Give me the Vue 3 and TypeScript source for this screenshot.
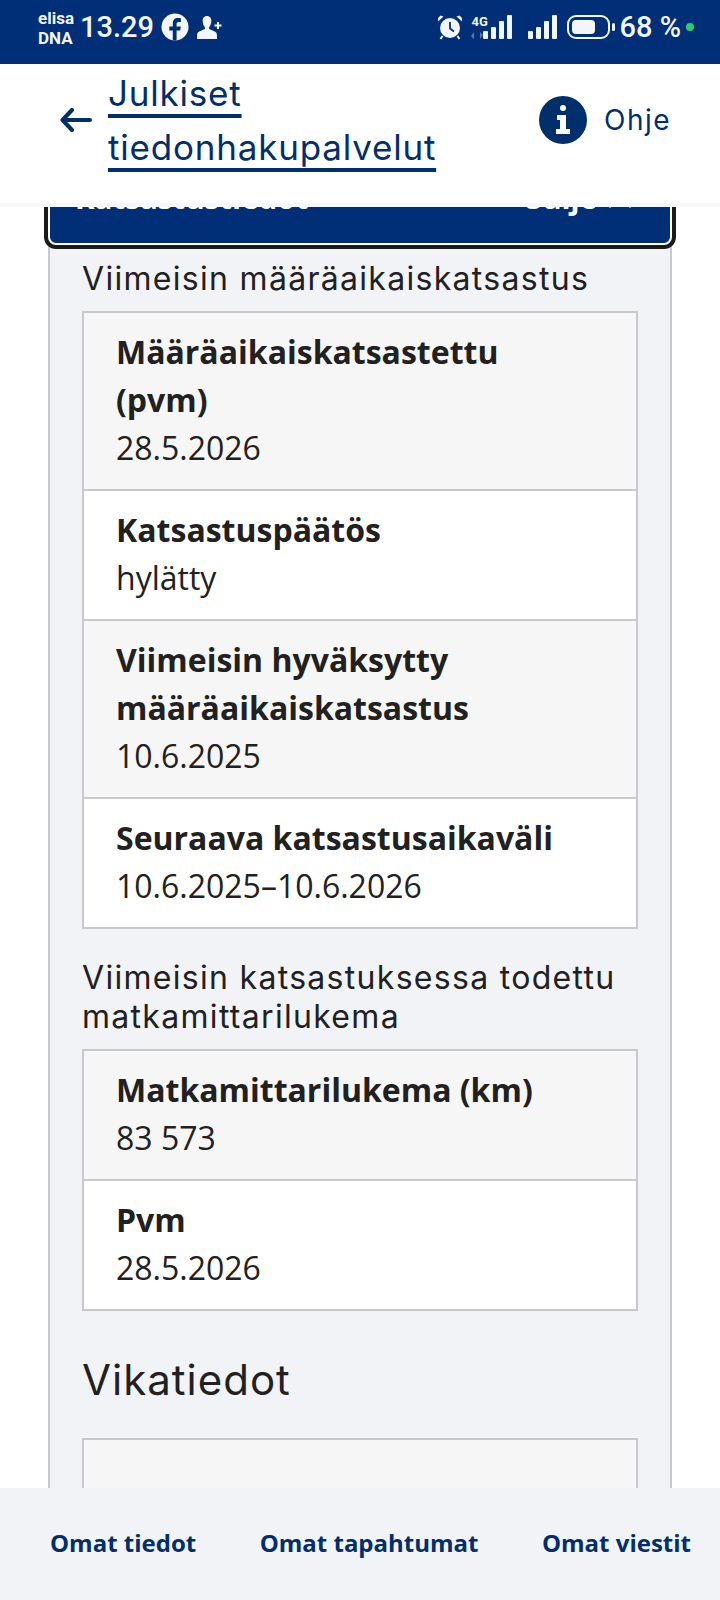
<template>
  <div class="page">
    <!-- android status bar -->
    <div class="status">
      <div class="carrier"><span>elisa</span><span>DNA</span></div>
      <span class="clock">13.29</span>
      <svg class="ic-fb" viewBox="0 0 28 28">
        <circle cx="14" cy="14" r="13.5" fill="#f2f5fa" />
        <path d="M15.6 27.5V17.4h3.6l.6-4h-4.2v-2.5c0-1.2.5-2 2.1-2h2.2V5.3c-.5-.1-1.700-.2-3-.2-3.100 0-5.100 1.900-5.100 5.200v3.100H8.300v4h3.500v10.100z" fill="#002f78" />
      </svg>
      <svg class="ic-user" viewBox="0 0 26 25">
        <path d="M10 1c3 0 4.600 2.300 4.300 5.400-.2 2.300-1 4.300-2 5.500-.6.800-.4 1.900.5 2.300l5.400 2.600c1.400.7 1.800 2 1.800 4.200v3H0v-3c0-2.200.4-3.500 1.800-4.200l5.400-2.600c.9-.4 1.100-1.500.5-2.300-1-1.200-1.800-3.200-2-5.500C5.400 3.300 7 1 10 1z" fill="#f2f5fa" />
        <path d="M20 7h2v2.500h2.500v2H22V14h-2v-2.500h-2.500v-2H20z" fill="#f2f5fa" />
      </svg>
      <div class="spacer"></div>
      <svg class="ic-alarm" viewBox="0 0 26 26">
        <circle cx="13" cy="14" r="10" fill="#f2f5fa" />
        <path d="M13 8v6.500l4 3" fill="none" stroke="#002f78" stroke-width="1.800" />
        <path d="M1 7.500 6.500 2.500 3.500 1.500 1 4zM25 7.500 19.500 2.500 22.500 1.500 25 4z" fill="#f2f5fa" />
        <path d="M5.500 22 3.500 25M20.500 22l2 3" stroke="#f2f5fa" stroke-width="2" />
      </svg>
      <div class="net">
        <span class="four-g">4G</span>
        <svg class="arrows" viewBox="0 0 12 7"><path d="M3 0v7L0 4zM9 7V0l3 3z" fill="#5b78a8" /></svg>
      </div>
      <div class="bars first">
        <i v-for="h in barHeights" :key="h" :style="{ height: h + 'px' }"></i>
      </div>
      <div class="bars second">
        <i v-for="h in barHeights" :key="h" :style="{ height: h + 'px' }"></i>
      </div>
      <div class="battery"><div class="level"></div></div>
      <div class="nub"></div>
      <span class="percent">68 %</span>
      <span class="dot"></span>
    </div>

    <!-- app header -->
    <header class="top">
      <svg class="back" viewBox="0 0 32 24">
        <path d="M30 12H3M12 2 2.500 12l9.500 10" fill="none" stroke="#002f6c" stroke-width="4" stroke-linecap="round" stroke-linejoin="round" />
      </svg>
      <a class="title">Julkiset tiedonhakupalvelut</a>
      <svg class="info" viewBox="0 0 48 48">
        <circle cx="24" cy="24" r="24" fill="#002f6c" />
        <circle cx="24" cy="12" r="3" fill="#fff" />
        <path d="M18 19h9v14h4v5H17v-5h4v-9h-3z" fill="#fff" />
      </svg>
      <span class="help">Ohje</span>
    </header>

    <main class="scroll">
      <div class="card">
        <div class="accordion">
          <span>Katsastustiedot</span>
          <span class="toggle">
            Sulje
            <svg viewBox="0 0 24 14"><path d="M1 13 12 2l11 11" fill="none" stroke="#fff" stroke-width="3" /></svg>
          </span>
        </div>

        <div class="body">
          <section v-for="group in groups" :key="group.title" class="group">
            <h3>{{ group.title }}</h3>
            <dl class="table">
              <div v-for="row in group.rows" :key="row.label" class="row">
                <dt>{{ row.label }}</dt>
                <dd>{{ row.value }}</dd>
              </div>
            </dl>
          </section>

          <h2>Vikatiedot</h2>
          <div class="table"><div class="row empty"></div></div>
        </div>
      </div>
    </main>

    <nav class="bottom">
      <a>Omat tiedot</a>
      <a>Omat tapahtumat</a>
      <a>Omat viestit</a>
    </nav>
  </div>
</template>

<script setup lang="ts">
interface Row {
  label: string
  value: string
}

const barHeights = [8, 12, 18, 24]

const groups: { title: string; rows: Row[] }[] = [
  {
    title: 'Viimeisin määräaikaiskatsastus',
    rows: [
      { label: 'Määräaikaiskatsastettu (pvm)', value: '28.5.2026' },
      { label: 'Katsastuspäätös', value: 'hylätty' },
      { label: 'Viimeisin hyväksytty määräaikaiskatsastus', value: '10.6.2025' },
      { label: 'Seuraava katsastusaikaväli', value: '10.6.2025–10.6.2026' }
    ]
  },
  {
    title: 'Viimeisin katsastuksessa todettu matkamittarilukema',
    rows: [
      { label: 'Matkamittarilukema (km)', value: '83 573' },
      { label: 'Pvm', value: '28.5.2026' }
    ]
  }
]
</script>

<style>
html,
body {
  margin: 0;
  background: #fff;
}
</style>

<style scoped>
.page {
  width: 720px;
  height: 1600px;
  display: flex;
  flex-direction: column;
  overflow: hidden;
  font-family: "Open Sans", "Noto Sans", sans-serif;
  color: #212121;
}

/* status bar */
.status {
  height: 64px;
  flex: none;
  background: #002f78;
  color: #f2f5fa;
  display: flex;
  align-items: center;
  padding: 0 26px 10px 38px;
  box-sizing: border-box;
  font-family: Roboto, sans-serif;
}
.carrier {
  display: flex;
  flex-direction: column;
  font-size: 17px;
  font-weight: 700;
  line-height: 20px;
  width: 42px;
  flex: none;
  margin-top: 2px;
}
.clock {
  font-size: 29px;
  font-weight: 500;
  width: 81px;
  flex: none;
}
.ic-fb {
  width: 28px;
  height: 28px;
}
.ic-user {
  width: 26px;
  height: 25px;
  margin-left: 8px;
}
.spacer {
  flex: 1;
}
.ic-alarm {
  width: 26px;
  height: 26px;
  margin-right: 8px;
}
.net {
  width: 12px;
  height: 24px;
  display: flex;
  flex-direction: column;
  align-items: flex-start;
  justify-content: space-between;
}
.four-g {
  font-size: 13px;
  font-weight: 700;
  line-height: 13px;
  white-space: nowrap;
}
.arrows {
  width: 12px;
  height: 7px;
}
.bars {
  height: 24px;
  display: flex;
  align-items: flex-end;
  gap: 3px;
}
.bars i {
  width: 5px;
  background: #f2f5fa;
  border-radius: 1px;
}
.bars.second {
  margin-left: 16px;
}
.battery {
  width: 43px;
  height: 24px;
  box-sizing: border-box;
  border: 2px solid #f2f5fa;
  border-radius: 9px;
  padding: 3px;
  margin-left: 10px;
}
.level {
  width: 68%;
  height: 100%;
  background: #f2f5fa;
  border-radius: 4px;
}
.nub {
  width: 3px;
  height: 8px;
  margin-left: 2px;
  margin-right: 4px;
  background: #f2f5fa;
  border-radius: 2px;
}
.percent {
  font-size: 29px;
  font-weight: 500;
  white-space: pre;
}
.dot {
  width: 8px;
  height: 8px;
  border-radius: 50%;
  background: #2ecc71;
  margin-left: 5px;
}

/* header */
.top {
  position: relative;
  z-index: 2;
  height: 143px;
  flex: none;
  background: #fff;
  background-clip: padding-box;
  border-bottom: 4px solid #f7f7f8;
  display: flex;
  align-items: center;
  padding: 0 0 28px 60px;
  box-sizing: border-box;
}
.back {
  width: 32px;
  height: 24px;
  flex: none;
  margin-right: 16px;
}
.title {
  width: 395px;
  flex: none;
  font-family: Inter, sans-serif;
  font-size: 35px;
  letter-spacing: 0.8px;
  line-height: 54px;
  color: #002f6c;
  text-decoration: underline;
  text-decoration-thickness: 4px;
  text-underline-offset: 8px;
}
.info {
  width: 48px;
  height: 48px;
  flex: none;
  margin-left: 36px;
}
.help {
  font-family: Inter, sans-serif;
  font-size: 28px;
  letter-spacing: 1.5px;
  color: #002f6c;
  margin-left: 17px;
}

/* scrolled content */
.scroll {
  flex: 1;
  min-height: 0;
  overflow: hidden;
  padding: 0 48px;
}
.card {
  background: #f1f3f7;
  border: 2px solid #c8c9cc;
  border-top: 0;
  margin-top: -58px;
  height: 1600px;
  box-sizing: border-box;
}
.accordion {
  margin: 0 -2px;
  height: 96px;
  box-sizing: border-box;
  background: #002f78;
  border: 2px solid #fff;
  border-radius: 8px;
  box-shadow: 0 0 0 4px #1a1a1a;
  padding: 23px 38px 0 25px;
  color: #fff;
  font-size: 29.5px;
  font-weight: 700;
  line-height: 48px;
  display: flex;
  justify-content: space-between;
  align-items: flex-start;
}
.toggle {
  display: flex;
  align-items: center;
  gap: 11px;
}
.toggle svg {
  width: 24px;
  height: 14px;
  margin-top: 6px;
}
.body {
  padding: 14px 32px 0;
}
.group {
  margin-bottom: 29px;
}
h3 {
  margin: 0 0 13px;
  font-family: Inter, sans-serif;
  font-size: 32px;
  letter-spacing: 1.3px;
  font-weight: 400;
  line-height: 39px;
}
h2 {
  margin: 43px 0 32px;
  font-family: Inter, sans-serif;
  font-size: 42px;
  letter-spacing: 1px;
  font-weight: 400;
  line-height: 52px;
}
.table {
  margin: 0;
  border: 2px solid #c8c9cc;
  border-bottom: 0;
}
.row {
  padding: 15px 44px 17px 32px;
  border-bottom: 2px solid #c8c9cc;
  background: #fff;
  font-size: 32px;
  line-height: 48px;
}
.row:nth-child(odd) {
  background: #f6f6f7;
}
.row.empty {
  height: 96px;
}
dt {
  font-weight: 700;
}
dd {
  margin: 0;
}

/* bottom nav */
.bottom {
  position: relative;
  z-index: 2;
  height: 112px;
  flex: none;
  background: #f1f3f7;
  display: flex;
  justify-content: space-between;
  align-items: center;
  padding: 0 29px 4px 50px;
  box-sizing: border-box;
  color: #002f6c;
  font-size: 24px;
  font-weight: 700;
}
</style>
